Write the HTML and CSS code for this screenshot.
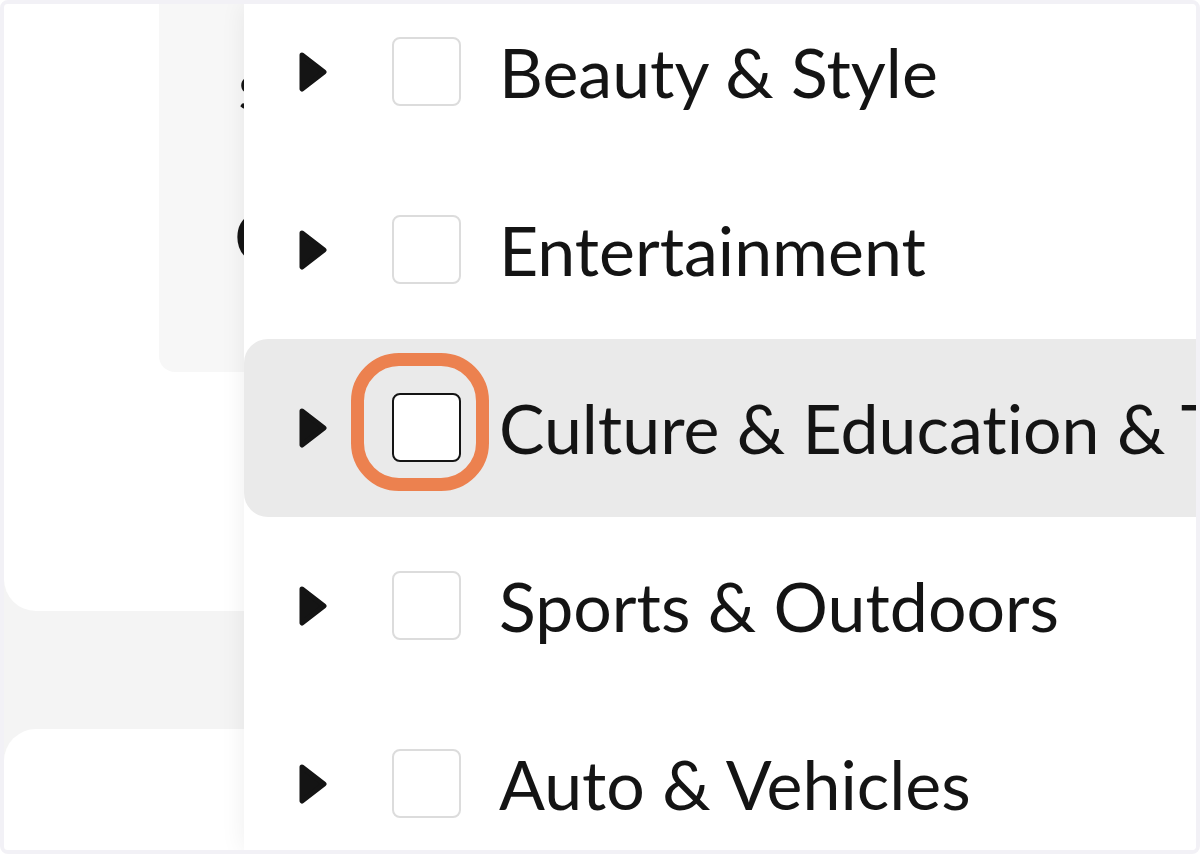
FILE: index.html
```html
<!DOCTYPE html>
<html lang="en">
<head>
  <meta charset="UTF-8">
  <meta name="viewport" content="width=device-width, initial-scale=1.0">
  <title>Categories</title>
  <link rel="stylesheet" href="styles.css">
</head>
<body>

<div class="frame">
  <!-- Page behind the dropdown -->
  <div class="page">
    <div class="card card-top">
      <div class="panel">
        <span class="panel-text">s</span>
        <strong class="panel-title">C</strong>
      </div>
    </div>
    <div class="card card-bottom"></div>
  </div>

  <!-- Category dropdown -->
  <ul class="dropdown">
    <li class="row">
      <button class="toggle" type="button" aria-label="Expand Beauty &amp; Style">
        <svg class="arrow" viewBox="0 0 28 40"><path d="M3 3 L25 20 L3 37 Z"/></svg>
      </button>
      <span class="check"><input class="box" type="checkbox" id="beauty"></span>
      <label class="name" for="beauty">Beauty &amp; Style</label>
    </li>
    <li class="row">
      <button class="toggle" type="button" aria-label="Expand Entertainment">
        <svg class="arrow" viewBox="0 0 28 40"><path d="M3 3 L25 20 L3 37 Z"/></svg>
      </button>
      <span class="check"><input class="box" type="checkbox" id="entertainment"></span>
      <label class="name" for="entertainment">Entertainment</label>
    </li>
    <li class="row active">
      <button class="toggle" type="button" aria-label="Expand Culture &amp; Education">
        <svg class="arrow" viewBox="0 0 28 40"><path d="M3 3 L25 20 L3 37 Z"/></svg>
      </button>
      <span class="check"><input class="box" type="checkbox" id="culture"><span class="ring"></span></span>
      <label class="name" for="culture">Culture &amp; Education &amp; T</label>
    </li>
    <li class="row">
      <button class="toggle" type="button" aria-label="Expand Sports &amp; Outdoors">
        <svg class="arrow" viewBox="0 0 28 40"><path d="M3 3 L25 20 L3 37 Z"/></svg>
      </button>
      <span class="check"><input class="box" type="checkbox" id="sports"></span>
      <label class="name" for="sports">Sports &amp; Outdoors</label>
    </li>
    <li class="row">
      <button class="toggle" type="button" aria-label="Expand Auto &amp; Vehicles">
        <svg class="arrow" viewBox="0 0 28 40"><path d="M3 3 L25 20 L3 37 Z"/></svg>
      </button>
      <span class="check"><input class="box" type="checkbox" id="auto"></span>
      <label class="name" for="auto">Auto &amp; Vehicles</label>
    </li>
  </ul>
</div>

</body>
</html>
```

FILE: styles.css
```css
* {
  box-sizing: border-box;
}

body {
  margin: 0;
  background-color: #ffffff;
  font-family: Lato, "Open Sans", sans-serif;
  font-size: 68px;
  font-variant-ligatures: none;
  line-height: 80px;
  color: #141414;
}

.frame {
  display: flex;
  height: 100vh;
  border: 4px solid #f2f1f6;
  border-radius: 8px;
  overflow: hidden;
}

/* Page behind the dropdown */
.page {
  flex: 0 0 240px;
  display: flex;
  flex-direction: column;
  gap: 118px;
  background-color: #f4f4f4;
  overflow: hidden;
}

.card {
  background-color: #ffffff;
}

.card-top {
  flex: 5;
  border-bottom-left-radius: 32px;
  padding-left: 155px;
}

.card-bottom {
  flex: 1;
  border-top-left-radius: 32px;
}

.panel {
  display: flex;
  flex-direction: column;
  gap: 72px;
  height: 368px;
  padding: 40px 0 0 76px;
  background-color: #f7f7f7;
  border-bottom-left-radius: 16px;
  overflow: hidden;
}

.panel-text {
  padding-left: 3px;
}

.panel-title {
  font-weight: 900;
}

/* Category dropdown */
.dropdown {
  flex: 1;
  min-width: 0;
  display: flex;
  flex-direction: column;
  justify-content: center;
  margin: 0;
  padding: 2px 0 0;
  list-style: none;
  background-color: #ffffff;
  box-shadow: 0 0 24px rgba(0, 0, 0, 0.07);
}

.row {
  flex: 0 0 178px;
  display: flex;
  align-items: center;
  padding-left: 55px;
  border-radius: 24px 0 0 24px;
  overflow: hidden;
}

.active {
  background-color: #eaeaea;
}

.toggle {
  flex: none;
  display: flex;
  margin-right: 65px;
  padding: 0;
  border: none;
  background: none;
  cursor: pointer;
}

.arrow {
  width: 28px;
  height: 40px;
  fill: #141414;
  stroke: #141414;
  stroke-width: 5;
  stroke-linejoin: round;
}

.check {
  flex: none;
  display: flex;
  position: relative;
  margin: 0 38px 2px 0;
}

.box {
  appearance: none;
  width: 69px;
  height: 69px;
  margin: 0;
  border: 2px solid #dcdcdc;
  border-radius: 8px;
  background-color: #ffffff;
}

.active .box {
  border-color: #141414;
}

/* Highlight drawn over the checkbox */
.ring {
  position: absolute;
  top: -40px;
  left: -41px;
  width: 138px;
  height: 138px;
  border: 13px solid #ec814f;
  border-radius: 48px;
  pointer-events: none;
}

.name {
  white-space: nowrap;
}
```
